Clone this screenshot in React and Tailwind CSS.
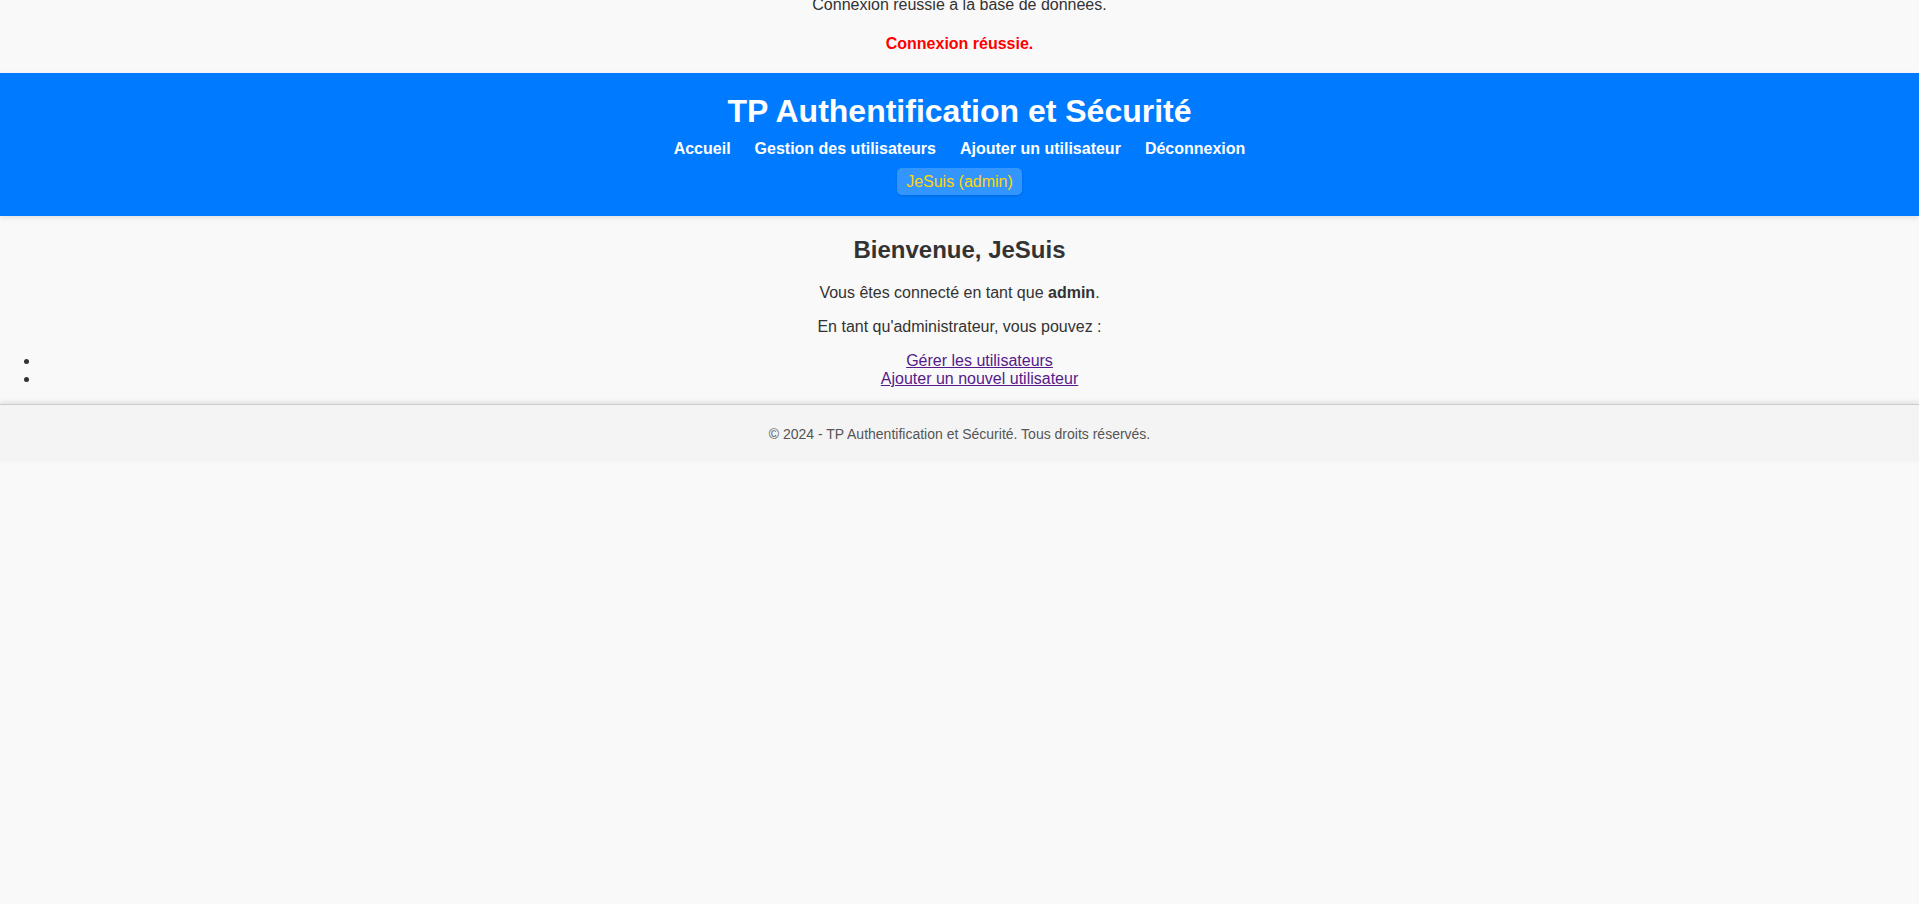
const NAV_LINKS = ['Accueil', 'Gestion des utilisateurs', 'Ajouter un utilisateur', 'Déconnexion'];

const Header = () => (
  <header className="bg-[#007bff] text-white text-center pt-[20px] pb-[21px] shadow-[0_2px_5px_rgba(0,0,0,0.1)]">
    <h1 className="text-[32px] leading-[37px] font-bold">TP Authentification et Sécurité</h1>
    <nav className="mt-[10px] flex justify-center gap-[24px] text-[16px] leading-[18px] font-bold">
      {NAV_LINKS.map((label) => (
        <a key={label} href="#" className="text-white no-underline">
          {label}
        </a>
      ))}
    </nav>
    <div className="mt-[10px] flex justify-center">
      <span className="h-[27px] px-[9px] flex items-center rounded-[5px] bg-[#3395ff] text-[#ffd700] text-[16px] shadow-[0_1px_3px_rgba(0,0,0,0.15)]">
        JeSuis (admin)
      </span>
    </div>
  </header>
);

export default function App() {
  return (
    <div className="min-h-[904px] bg-[#f9f9f9] text-[#333] text-[16px] leading-[18px] font-['Liberation_Sans',Arial,sans-serif] overflow-hidden">
      {/* messages from the connection script */}
      <div className="text-center mt-[-4px]">Connexion réussie à la base de données.</div>
      <p className="text-center mt-[21px] text-[#ff0000] font-bold">Connexion réussie.</p>

      <div className="mt-[20px]">
        <Header />
      </div>

      <main className="text-center">
        <h2 className="pt-[20px] text-[24px] leading-[28px] font-bold">Bienvenue, JeSuis</h2>
        <p className="mt-[19.5px]">
          Vous êtes connecté en tant que <strong className="font-bold">admin</strong>.
        </p>
        <p className="mt-[16.5px]">En tant qu'administrateur, vous pouvez :</p>
        <ul className="mt-[16px] pb-[16px] list-disc pl-10">
          <li>
            <a href="#" className="underline text-[#551a8b]">Gérer les utilisateurs</a>
          </li>
          <li>
            <a href="#" className="underline text-[#551a8b]">Ajouter un nouvel utilisateur</a>
          </li>
        </ul>
      </main>

      <footer className="border-t border-[#ccc] bg-[#f4f4f4] pt-[21px] pb-[19px] text-center text-[14px] leading-[16px] text-[#555] shadow-[0_-2px_5px_rgba(0,0,0,0.1)]">
        © 2024 - TP Authentification et Sécurité. Tous droits réservés.
      </footer>
    </div>
  );
}
